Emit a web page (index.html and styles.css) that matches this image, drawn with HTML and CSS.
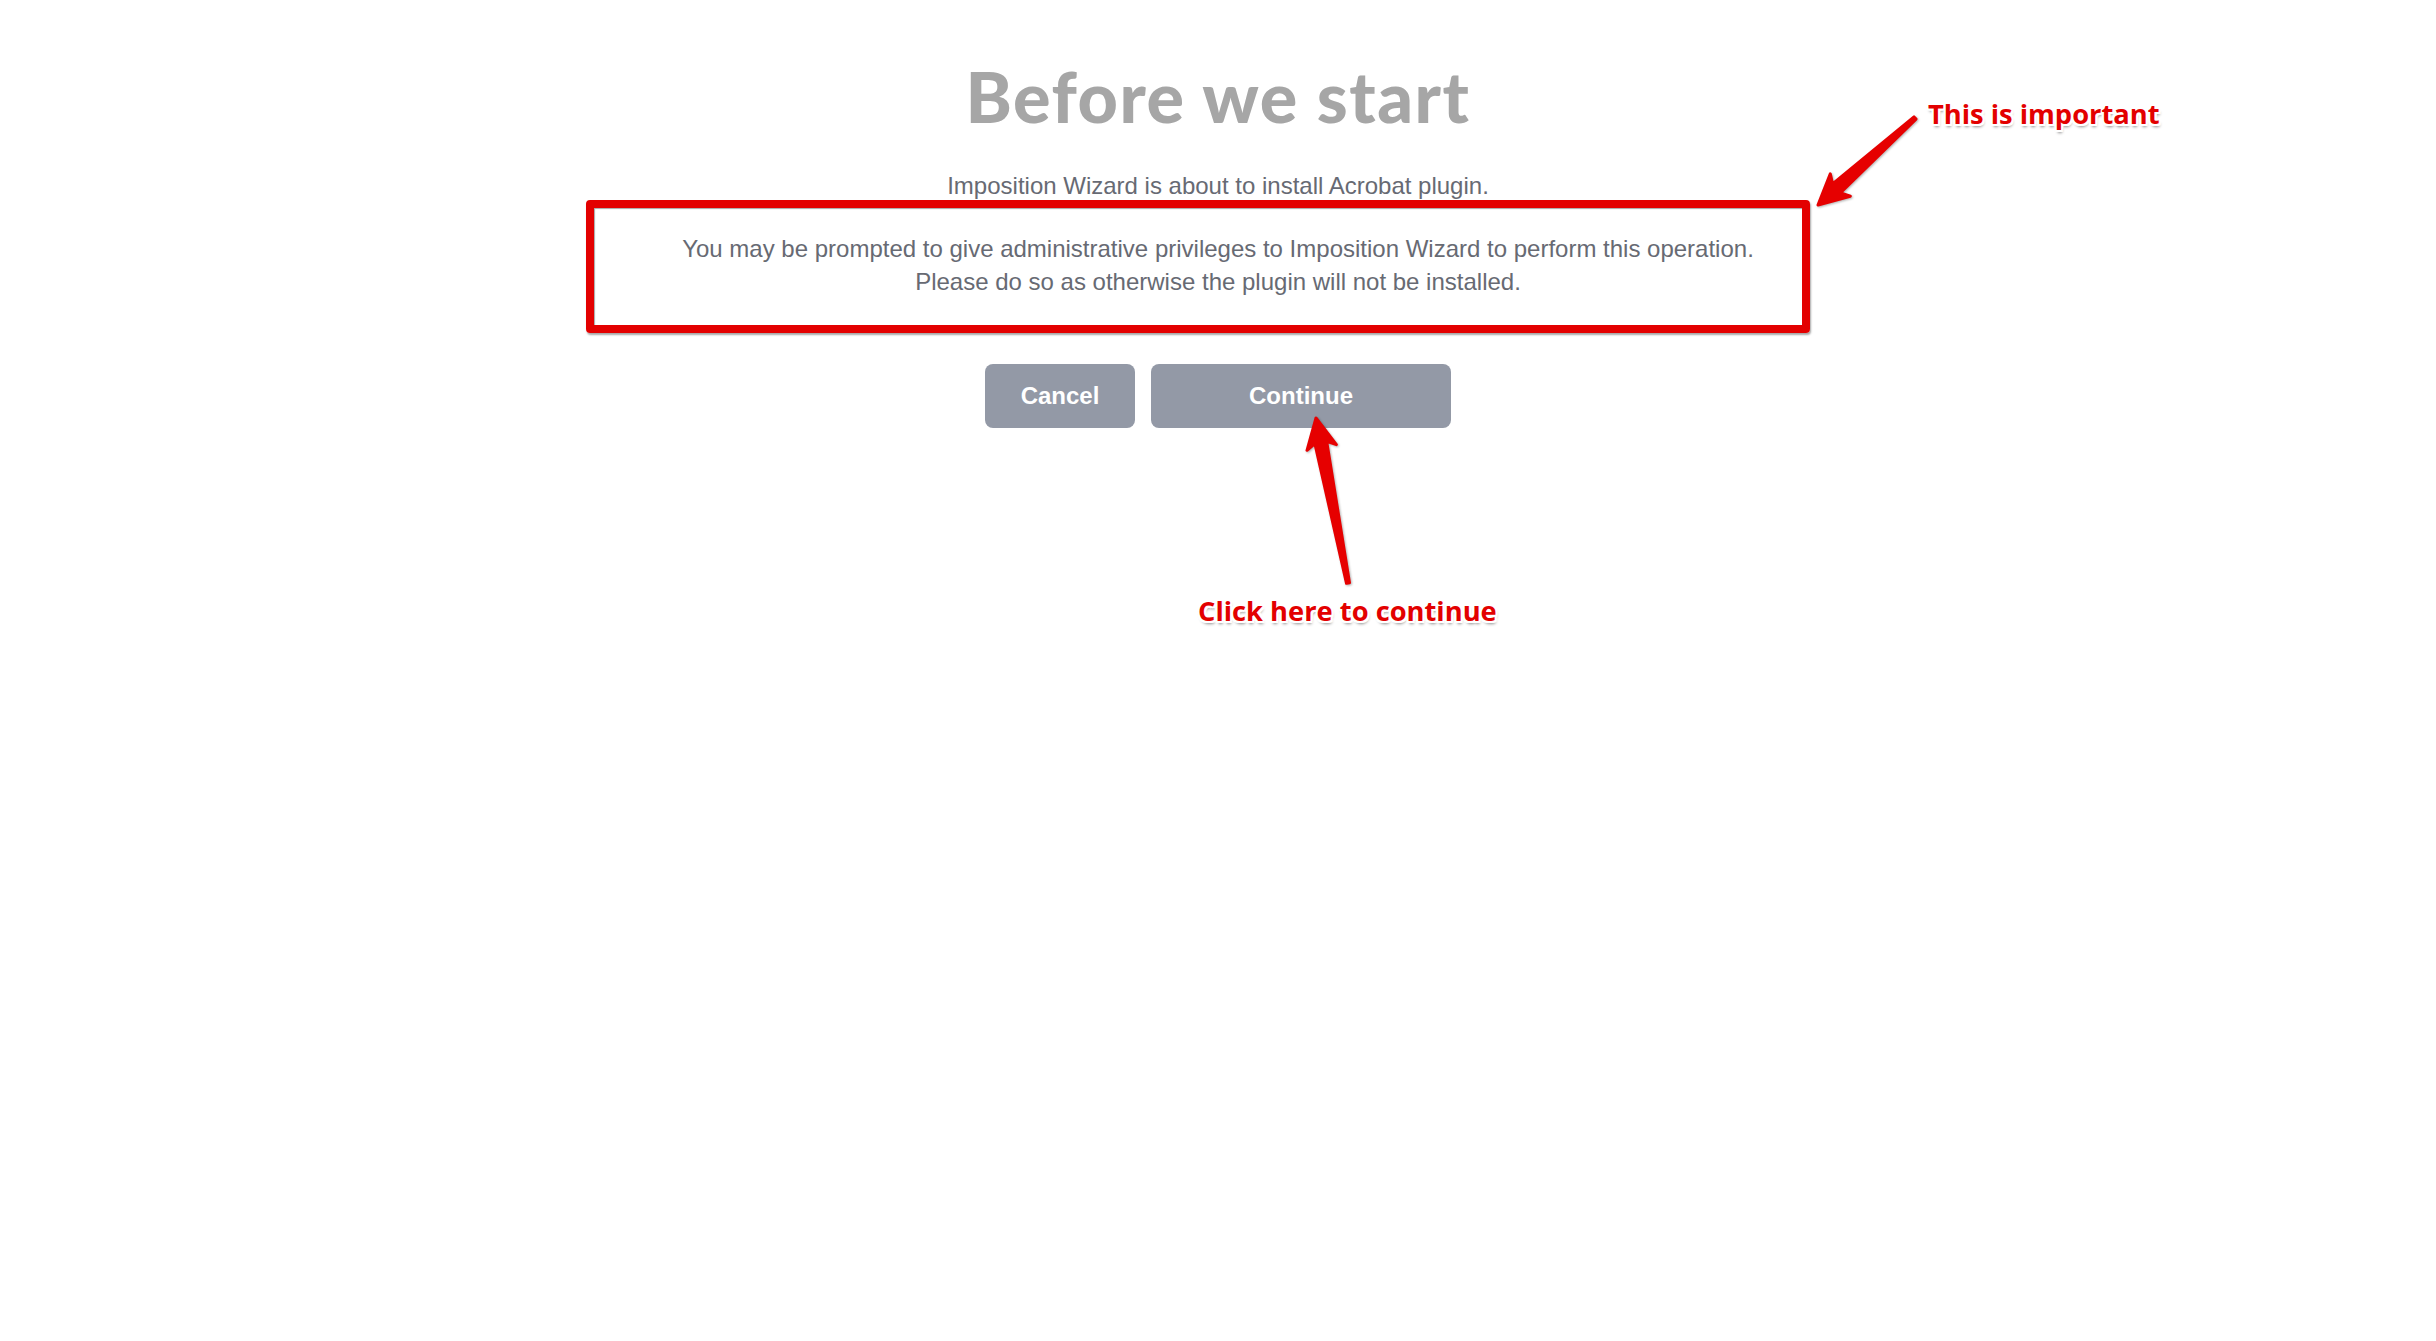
FILE: index.html
```html
<!DOCTYPE html>
<html lang="en">
<head>
<meta charset="utf-8">
<title>Before we start</title>
<link rel="stylesheet" href="styles.css">
</head>
<body>
<main class="wizard">
  <h1 class="title">Before we start</h1>
  <p class="intro">Imposition Wizard is about to install Acrobat plugin.</p>
  <p class="notice">You may be prompted to give administrative privileges to Imposition Wizard to perform this operation.<br>Please do so as otherwise the plugin will not be installed.</p>
  <div class="actions">
    <button class="btn btn-cancel" type="button">Cancel</button>
    <button class="btn btn-continue" type="button">Continue</button>
  </div>
</main>

<div class="annotations">
  <div class="highlight-box"></div>
  <svg class="arrows" width="2436" height="1341" viewBox="0 0 2436 1341" xmlns="http://www.w3.org/2000/svg">
    <polygon class="arrow" points="1916,119.1 1840.6,192.8 1850.3,196.2 1818,205 1830.3,173.8 1832.6,183.8 1914,116.9"/>
    <polygon class="arrow" points="1349.5,582.7 1326.7,441.4 1336.4,444.6 1316,418 1307,450.3 1314.9,443.7 1346.5,583.3"/>
  </svg>
  <div class="label label-important">This is important</div>
  <div class="label label-continue">Click here to continue</div>
</div>
</body>
</html>
```

FILE: styles.css
```css
html, body {
  margin: 0;
  padding: 0;
  background: #ffffff;
}

body {
  width: 2436px;
  height: 1341px;
  position: relative;
  overflow: hidden;
  font-family: "Liberation Sans", Arial, sans-serif;
}

.wizard {
  padding-top: 61px;
  text-align: center;
}

.title {
  margin: 0;
  font-family: Lato, "Open Sans", sans-serif;
  font-weight: 900;
  font-size: 70px;
  line-height: 70px;
  letter-spacing: 1.5px;
  color: #a6a6a6;
}

.intro,
.notice {
  margin: 0;
  font-size: 24px;
  line-height: 33px;
  color: #676a73;
}

.intro {
  margin-top: 38px;
}

.notice {
  margin-top: 30px;
}

.actions {
  margin-top: 66px;
  display: flex;
  justify-content: center;
  gap: 16px;
}

.btn {
  height: 64px;
  border: none;
  border-radius: 8px;
  background: #9399a6;
  color: #ffffff;
  font-family: "Liberation Sans", Arial, sans-serif;
  font-weight: bold;
  font-size: 24px;
  padding: 0;
  cursor: pointer;
}

.btn-cancel {
  width: 150px;
}

.btn-continue {
  width: 300px;
}

/* annotation overlay */
.annotations {
  position: absolute;
  left: 0;
  top: 0;
  width: 2436px;
  height: 1341px;
  pointer-events: none;
}

.highlight-box {
  position: absolute;
  left: 586px;
  top: 200px;
  width: 1224px;
  height: 133px;
  box-sizing: border-box;
  border: 8px solid #e30000;
  border-radius: 4px;
  box-shadow: 1px 2px 2px rgba(0, 0, 0, 0.35), inset 1px 1px 1px rgba(0, 0, 0, 0.35);
}

.arrows {
  position: absolute;
  left: 0;
  top: 0;
  filter: drop-shadow(1px 1px 1px rgba(0, 0, 0, 0.3));
}

.arrow {
  fill: #e60000;
  stroke: #e60000;
  stroke-width: 3;
  stroke-linejoin: round;
}

.label {
  position: absolute;
  font-family: "Open Sans", "Noto Sans", sans-serif;
  font-weight: bold;
  font-size: 27.3px;
  line-height: 28px;
  color: #e30000;
  white-space: nowrap;
  text-shadow:
    -2px -2px 0 #fff, 2px -2px 0 #fff, -2px 2px 0 #fff, 2px 2px 0 #fff,
    0 -2px 0 #fff, 0 2px 0 #fff, -2px 0 0 #fff, 2px 0 0 #fff,
    1px 3px 3px rgba(0, 0, 0, 0.45);
}

.label-important {
  left: 1928px;
  top: 100px;
}

.label-continue {
  left: 1198px;
  top: 597px;
}
```
